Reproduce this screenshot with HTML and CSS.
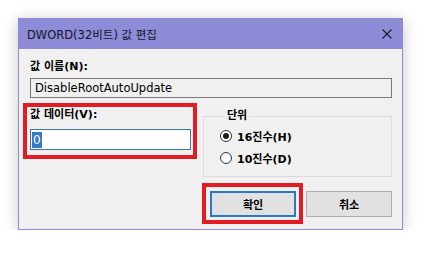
FILE: index.html
```html
<!DOCTYPE html>
<html lang="ko">
<head>
<meta charset="utf-8">
<link rel="stylesheet" href="styles.css">
</head>
<body>
<div class="stage">
  <div class="dialog">
    <div class="titlebar">
      <span class="title">DWORD(32비트) 값 편집</span>
      <svg class="close" width="10" height="10" viewBox="0 0 10 10"><path d="M0.5 0.5L9.5 9.5M9.5 0.5L0.5 9.5" stroke="#1b1b2a" stroke-width="1.1" fill="none"/></svg>
    </div>
    <div class="body">
      <div class="label">값 이름(N):</div>
      <div class="namefield">DisableRootAutoUpdate</div>
      <div class="lower">
        <div class="mark data">
          <div class="label">값 데이터(V):</div>
          <div class="valuefield"><span class="sel">0</span></div>
        </div>
        <fieldset class="group">
          <legend class="label">단위</legend>
          <div class="radio"><span class="circle on"></span><span class="rlabel">16진수(H)</span></div>
          <div class="radio"><span class="circle"></span><span class="rlabel">10진수(D)</span></div>
        </fieldset>
      </div>
      <div class="buttons">
        <div class="mark okmark"><button class="btn ok">확인</button></div>
        <button class="btn">취소</button>
      </div>
    </div>
  </div>
</div>
</body>
</html>
```
FILE: styles.css
```css
html, body { margin: 0; padding: 0; background: #ffffff; }
body { font-family: "DejaVu Sans", "Noto Sans CJK KR", sans-serif; font-size: 11px; color: #000; }
.stage { padding: 18px 0 0 18px; }
.dialog {
  width: 385px; height: 212px; box-sizing: border-box;
  border: 1px solid #8f8cd6; background: #f0f0f0;
  box-shadow: 0 2px 14px rgba(0,0,0,0.22);
  display: flex; flex-direction: column;
}
.titlebar {
  height: 30px; background: #8e8bd7; flex: none;
  display: flex; align-items: center; justify-content: space-between;
  padding: 0 10px 0 8px;
}
.title { font-size: 11.5px; color: #15152a; font-family: "DejaVu Sans", "Noto Sans CJK KR", sans-serif; }
.close { display: block; }
.body { padding: 11px 10px 0 11px; display: flex; flex-direction: column; }
.label { font-weight: bold; font-size: 11px; line-height: 14px; height: 14px; font-family: "DejaVu Sans", "Noto Sans CJK KR", sans-serif; }
.namefield {
  margin-top: 4px; height: 20px; box-sizing: border-box;
  border: 1px solid #7a7a7a; background: #f0f0f0;
  padding: 0 4px; line-height: 18px; font-size: 11.5px;
}
.lower { display: flex; margin-top: 5px; align-items: flex-start; }
.mark { border: 4px solid #e31b23; box-sizing: border-box; }
.data { margin-left: -7px; width: 174px; height: 56px; padding: 1px 2px 5px 3px; }
.valuefield {
  margin-top: 7px; height: 21px; box-sizing: border-box;
  border: 1px solid #3b74a8; background: #ffffff;
  padding: 1px 1px; display: flex; align-items: center;
}
.sel { background: #3379c8; color: #fff; font-size: 12px; line-height: 16px; padding: 0 1px; }
.group {
  margin: 6px 0 0 6px; padding: 0 0 7px 16px; width: 189px; box-sizing: border-box;
  border: 1px solid #dcdcdc; min-width: 0;
}
.group legend { margin-left: 5px; padding: 0 2px; }
.radio { height: 22px; display: flex; align-items: center; }
.radio:first-of-type { margin-top: 2px; }
.circle {
  width: 12px; height: 12px; box-sizing: border-box; border-radius: 50%;
  border: 1px solid #333; background: #fff; position: relative; flex: none;
}
.circle.on::after {
  content: ""; position: absolute; left: 2px; top: 2px; width: 6px; height: 6px;
  border-radius: 50%; background: #1a1a1a;
}
.rlabel { margin-left: 5px; font-weight: bold; font-size: 11px; }
.buttons { display: flex; justify-content: flex-end; align-items: center; margin-top: 6px; gap: 3px; }
.okmark { padding: 4px 3px 3px 4px; }
.btn {
  width: 86px; height: 26px; box-sizing: border-box; margin: 0;
  border: 1px solid #adadad; background: #e1e1e1;
  font-family: "DejaVu Sans", "Noto Sans CJK KR", sans-serif; font-size: 11px; font-weight: bold; color: #000;
}
.ok { border: 2px solid #2a78c4; }
```
